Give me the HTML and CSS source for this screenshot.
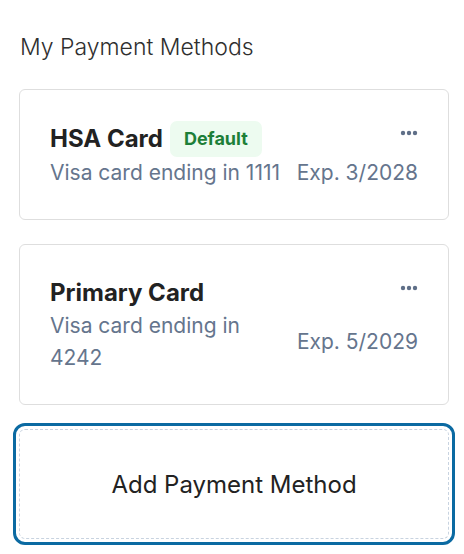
FILE: index.html
```html
<!DOCTYPE html>
<html lang="en">
<head>
    <meta charset="UTF-8">
    <meta name="viewport" content="width=device-width, initial-scale=1.0">
    <title>My Payment Methods</title>
    <link rel="stylesheet" href="styles.css">
</head>
<body>
    <div class="container">
        <h2 class="page-title">My Payment Methods</h2>

        <div class="method-card">
            <div class="method-head">
                <span class="method-name">HSA Card</span>
                <span class="badge">Default</span>
                <button class="menu-btn" aria-label="More options">
                    <svg width="18" height="6" viewBox="0 0 18 6"><circle cx="3" cy="3" r="2.2"/><circle cx="9" cy="3" r="2.2"/><circle cx="15" cy="3" r="2.2"/></svg>
                </button>
            </div>
            <div class="method-info">
                <span class="method-desc">Visa card ending in 1111</span>
                <span class="method-exp">Exp. 3/2028</span>
            </div>
        </div>

        <div class="method-card">
            <div class="method-head">
                <span class="method-name">Primary Card</span>
                <button class="menu-btn" aria-label="More options">
                    <svg width="18" height="6" viewBox="0 0 18 6"><circle cx="3" cy="3" r="2.2"/><circle cx="9" cy="3" r="2.2"/><circle cx="15" cy="3" r="2.2"/></svg>
                </button>
            </div>
            <div class="method-info">
                <span class="method-desc">Visa card ending in 4242</span>
                <span class="method-exp">Exp. 5/2029</span>
            </div>
        </div>

        <button class="add-btn">Add Payment Method</button>
    </div>
</body>
</html>
```

FILE: styles.css
```css
body {
    font-family: 'Inter', 'Noto Sans', sans-serif;
    margin: 0;
    padding: 0;
    background: #fff;
}

.container {
    padding: 32px 15px 10px 19px;
    width: 430px;
}

.page-title {
    font-size: 23px;
    font-weight: 300;
    color: #2f2f2f;
    margin: 0 0 27px 1px;
    line-height: 30px;
}

.method-card {
    border: 1px solid #dedede;
    border-radius: 6px;
    padding: 31px 30px 30px;
    margin-bottom: 24px;
}

.method-head {
    display: flex;
    align-items: center;
    min-height: 34px;
}

.method-name {
    font-size: 24px;
    font-weight: 700;
    color: #222;
    line-height: 34px;
}

.badge {
    margin-left: 7px;
    background-color: #edfbf0;
    color: #1d7f38;
    font-size: 18px;
    font-weight: 700;
    padding: 0 14px;
    line-height: 36px;
    border-radius: 7px;
}

.menu-btn {
    margin-left: auto;
    background: none;
    border: none;
    padding: 0;
    cursor: pointer;
    display: flex;
    align-self: flex-start;
    margin-top: 9px;
}

.menu-btn svg {
    fill: #5f6f88;
}

.method-info {
    display: flex;
    align-items: center;
    gap: 10px;
    font-size: 21px;
    line-height: 32px;
    color: #65758d;
}

.method-desc {
    flex: 1;
}

.method-exp {
    flex-shrink: 0;
}

.add-btn {
    display: block;
    width: 100%;
    height: 110px;
    background: #fff;
    border: 1px dashed #c8d3e0;
    border-radius: 6px;
    font-family: inherit;
    font-size: 24px;
    color: #222;
    outline: 3px solid #0b6aa2;
    outline-offset: 3px;
    cursor: pointer;
}
```
